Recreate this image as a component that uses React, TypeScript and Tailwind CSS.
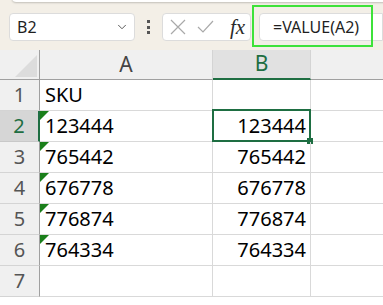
import { ChevronDown } from "lucide-react";

const rows = [
  { n: 1, a: "SKU", b: "", flag: false },
  { n: 2, a: "123444", b: "123444", flag: true },
  { n: 3, a: "765442", b: "765442", flag: true },
  { n: 4, a: "676778", b: "676778", flag: true },
  { n: 5, a: "776874", b: "776874", flag: true },
  { n: 6, a: "764334", b: "764334", flag: true },
  { n: 7, a: "", b: "", flag: false },
];

export default function App() {
  return (
    <div
      className="w-[383px] h-[305px] overflow-hidden bg-white text-[#1f1f1f]"
      style={{ fontFamily: '"Noto Sans", "Liberation Sans", sans-serif' }}
    >
      {/* formula bar */}
      <div className="relative h-[50px] bg-[#f3efe7]">
        <div className="absolute left-[12px] top-[-4px] w-[380px] h-[6px] bg-white rounded-bl-[4px] shadow-[0_1px_2px_rgba(0,0,0,0.2)]" />
        <div className="flex items-center pt-[13px] pl-[9px]">
          <div className="w-[126px] h-[28px] bg-white border border-[#dcdcdc] rounded-[4px] flex items-center justify-between pl-[7px] pr-[5px]">
            <span className="text-[16px] leading-none">B2</span>
            <ChevronDown className="w-[14px] h-[14px] text-[#444]" strokeWidth={1.5} />
          </div>
          <div className="w-[27px] flex flex-col items-center gap-[2.5px]">
            <span className="w-[3px] h-[3px] bg-[#555]" />
            <span className="w-[3px] h-[3px] bg-[#555]" />
            <span className="w-[3px] h-[3px] bg-[#555]" />
          </div>
          <div className="w-[89px] h-[28px] bg-white border border-[#dcdcdc] rounded-[4px] flex items-center pl-[7px] gap-[11px]">
            <svg width="16" height="16" viewBox="0 0 16 16" className="text-[#a9a9a9]">
              <path d="M1 1 L15 15 M15 1 L1 15" stroke="currentColor" strokeWidth="1.2" fill="none" />
            </svg>
            <svg width="17" height="14" viewBox="0 0 17 14" className="text-[#a9a9a9]">
              <path d="M1 7 L6 12 L16 1" stroke="currentColor" strokeWidth="1.2" fill="none" />
            </svg>
            <span
              className="text-[21px] italic leading-none text-[#2a2a2a] ml-[5px]"
              style={{ fontFamily: '"Liberation Serif", serif' }}
            >
              fx
            </span>
          </div>
          <div className="ml-[8px] flex-1 h-[28px] bg-white border border-[#dcdcdc] rounded-l-[4px] flex items-center pl-[13px]">
            <span className="text-[16px] leading-none">=VALUE(A2)</span>
          </div>
        </div>
        <div className="absolute left-[252px] top-[5px] w-[121px] h-[42px] border-2 border-[#3ee23a]" />
      </div>

      {/* grid */}
      <div className="grid grid-cols-[40px_173px_98px_1fr] grid-rows-[30px_repeat(7,31px)] text-[20px]">
        <div className="bg-[#f0f0f0] border-r border-b border-[#a0a0a0] relative">
          <svg width="22" height="22" viewBox="0 0 22 22" className="absolute left-[15px] top-[5px]">
            <path d="M22 0 L22 22 L0 22 Z" fill="#dcdcdc" />
          </svg>
        </div>
        <div className="bg-[#f0f0f0] border-r border-b border-[#d4d4d4] border-b-[#a0a0a0] flex items-center justify-center text-[21px] text-[#444]">
          A
        </div>
        <div className="bg-[#e1e1e1] border-r border-[#d4d4d4] border-b-2 border-b-[#1e6e42] flex items-center justify-center text-[21px] text-[#1e6e42]">
          B
        </div>
        <div className="bg-[#f0f0f0] border-b border-[#a0a0a0]" />

        {rows.map((r) => (
          <RowCells key={r.n} {...r} />
        ))}
      </div>
    </div>
  );
}

function RowCells({ n, a, b, flag }: { n: number; a: string; b: string; flag: boolean }) {
  const sel = n === 2;
  return (
    <>
      <div
        className={
          sel
            ? "bg-[#d6d6d6] border-r-2 border-r-[#1e6e42] border-b border-b-[#c8c8c8] flex items-center justify-center text-[#1e6e42]"
            : "bg-[#f0f0f0] border-r border-r-[#a0a0a0] border-b border-b-[#d4d4d4] flex items-center justify-center text-[#555]"
        }
      >
        {n}
      </div>
      <div className="relative border-r border-b border-[#d9d9d9] flex items-center pl-[5px] text-black">
        {flag && (
          <svg width="9" height="9" viewBox="0 0 9 9" className="absolute left-0 top-0">
            <path d="M0 0 L9 0 L0 9 Z" fill="#1a7f1a" />
          </svg>
        )}
        {a}
      </div>
      <div className="relative border-r border-b border-[#d9d9d9] flex items-center justify-end pr-[4px] text-black">
        {sel && (
          <>
            <div className="absolute left-[-1px] top-[-2px] right-[-1px] bottom-[-1px] border-2 border-[#1e6e42]" />
            <div className="absolute right-[-3px] bottom-[-3px] w-[6px] h-[6px] bg-[#1e6e42]" />
          </>
        )}
        {b}
      </div>
      <div className="border-b border-[#d9d9d9]" />
    </>
  );
}
